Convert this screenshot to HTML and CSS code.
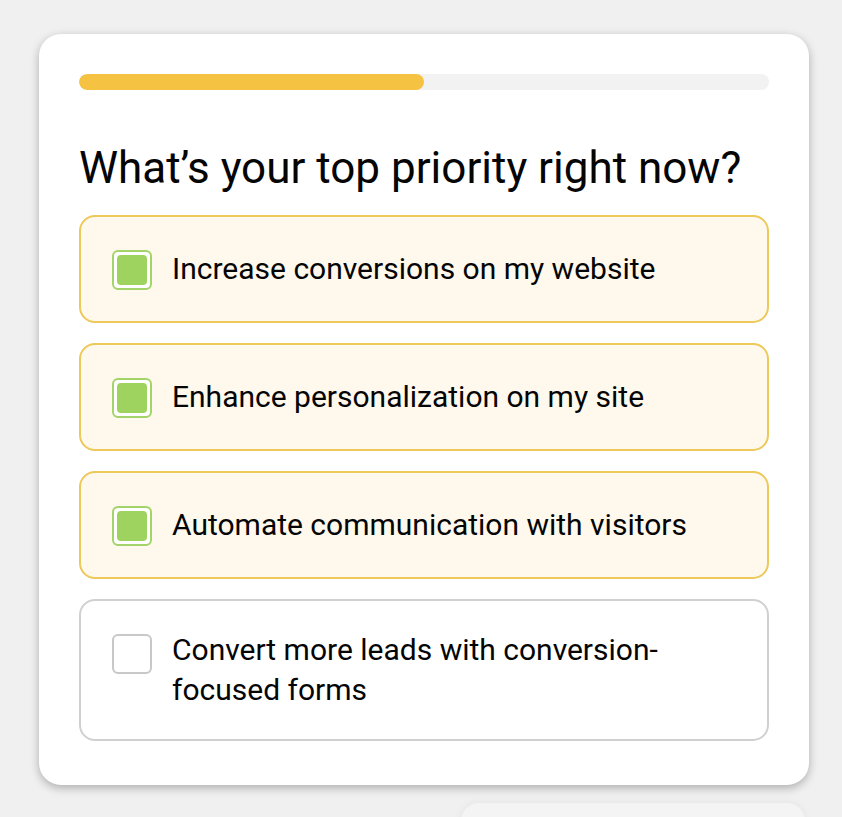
FILE: index.html
```html
<!DOCTYPE html>
<html lang="en">

<head>
    <meta charset="UTF-8">
    <meta name="viewport" content="width=device-width, initial-scale=1.0">
    <title>Quiz</title>
    <link rel="stylesheet" href="styles.css">
</head>

<body>
    <div class="quiz-card">
        <div class="progress">
            <div class="progress-fill" style="width: 50%;"></div>
        </div>

        <h2 class="question">What’s your top priority right now?</h2>

        <div class="options">
            <label class="option checked">
                <span class="box"><span class="box-fill"></span></span>
                <span class="option-text">Increase conversions on my website</span>
            </label>
            <label class="option checked">
                <span class="box"><span class="box-fill"></span></span>
                <span class="option-text">Enhance personalization on my site</span>
            </label>
            <label class="option checked">
                <span class="box"><span class="box-fill"></span></span>
                <span class="option-text">Automate communication with visitors</span>
            </label>
            <label class="option">
                <span class="box"></span>
                <span class="option-text">Convert more leads with conversion-focused forms</span>
            </label>
        </div>
    </div>

    <div class="next-card"></div>
</body>

</html>
```

FILE: styles.css
```css
body {
    margin: 0;
    background-color: #f0f0f0;
    font-family: Roboto, "Liberation Sans", sans-serif;
    color: #050505;
    overflow: hidden;
}

.quiz-card {
    width: 690px;
    margin: 34px 0 0 39px;
    padding: 40px 40px 44px;
    background-color: #fff;
    border-radius: 22px;
    box-shadow: 0 3px 10px rgba(0, 0, 0, 0.28);
}

.progress {
    height: 16px;
    background-color: #f2f2f2;
    border-radius: 8px;
    overflow: hidden;
}

.progress-fill {
    height: 100%;
    background-color: #f5c242;
    border-radius: 8px;
}

.question {
    font-size: 44px;
    font-weight: normal;
    line-height: 52px;
    margin: 52px 0 21px;
}

.options {
    display: flex;
    flex-direction: column;
    gap: 20px;
}

.option {
    display: flex;
    align-items: flex-start;
    gap: 20px;
    min-height: 108px;
    box-sizing: border-box;
    padding: 29px 30px 29px 31px;
    border: 2px solid #d0d0d0;
    border-radius: 16px;
    background-color: #fff;
}

.option.checked {
    border-color: #edc95a;
    background-color: #fff8ec;
}

.box {
    flex: none;
    width: 30px;
    height: 30px;
    margin-top: 4px;
    padding: 3px;
    border: 2px solid #c8c8c8;
    border-radius: 6px;
    background-color: #fff;
}

.checked .box {
    border-color: #a2d469;
}

.box-fill {
    display: block;
    width: 100%;
    height: 100%;
    border-radius: 4px;
    background-color: #9dd35e;
}

.option-text {
    align-self: center;
    font-size: 30px;
    line-height: 40px;
}

.next-card {
    width: 344px;
    height: 60px;
    margin: 18px 0 0 461px;
    background-color: #f4f4f4;
    border-radius: 18px;
    box-shadow: 0 0 8px rgba(0, 0, 0, 0.06);
}
```
